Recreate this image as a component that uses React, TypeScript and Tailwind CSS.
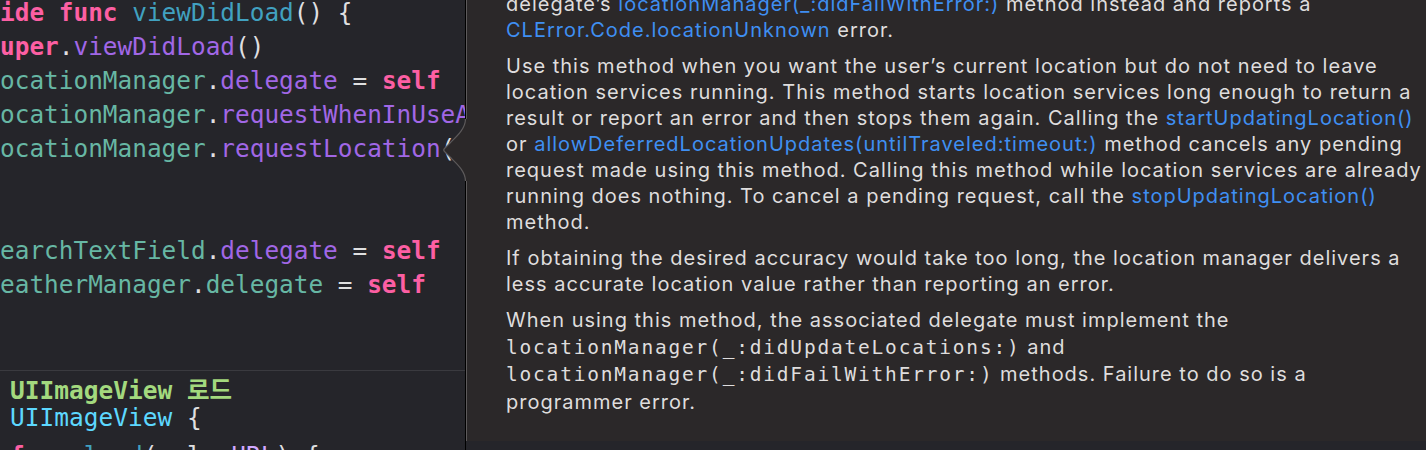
import React from 'react';

const K = ({ children }: { children: React.ReactNode }) => (
  <span className="text-[#fc5fa3] font-bold">{children}</span>
);
const P = ({ children }: { children: React.ReactNode }) => (
  <span className="text-[#67b7a4]">{children}</span>
);
const M = ({ children }: { children: React.ReactNode }) => (
  <span className="text-[#a167e6]">{children}</span>
);
const L = ({ children }: { children: React.ReactNode }) => (
  <span className="text-[#3f8ff2]">{children}</span>
);
const Mono = ({ children }: { children: React.ReactNode }) => (
  <span className="font-['DejaVu_Sans_Mono',monospace] text-[19.5px] tracking-[1.8px]">{children}</span>
);

const Line = ({ children }: { children?: React.ReactNode }) => (
  <div className="h-[34px] leading-[34px] whitespace-pre">{children ?? ' '}</div>
);

const App = () => {
  return (
    <div className="relative w-[1426px] h-[450px] overflow-hidden bg-[#25252a] text-[#dfdfe0]">
      {/* editor */}
      <div className="flex flex-col h-full font-['DejaVu_Sans_Mono','Noto_Sans_CJK_KR',monospace]">
        <div className="h-[370px] overflow-hidden text-[24.4px]">
          <div className="-mt-[4px] ml-[-73.4px]">
            <Line>
              <K>override</K> <K>func</K> <span className="text-[#41a1c0]">viewDidLoad</span>() {'{'}
            </Line>
            <Line>
              {'    '}<K>super</K>.<M>viewDidLoad</M>()
            </Line>
            <Line>
              {'    '}<P>locationManager</P>.<M>delegate</M> = <K>self</K>
            </Line>
            <Line>
              {'    '}<P>locationManager</P>.<M>requestWhenInUseAuthorization</M>()
            </Line>
            <Line>
              {'    '}<P>locationManager</P>.<M>requestLocation</M>()
            </Line>
            <Line />
            <Line />
            <Line>
              {'    '}<P>searchTextField</P>.<M>delegate</M> = <K>self</K>
            </Line>
            <Line>
              {'    '}<P>weatherManager</P>.<P>delegate</P> = <K>self</K>
            </Line>
            <Line />
          </div>
        </div>
        <div className="h-px bg-[#3a3a3f]" />
        <div className="flex-1 overflow-hidden pt-[6px] pl-[10px] text-[24.5px] leading-[27px]">
          <div className="whitespace-pre font-bold text-[#a3d97e]">UIImageView 로드</div>
          <div className="whitespace-pre">
            <span className="text-[#5dd8ff]">UIImageView</span> {'{'}
          </div>
          <div className="mt-[11px] whitespace-pre">
            <K>func</K> <span className="text-[#41a1c0]">load</span>(url: <span className="text-[#d0a8ff]">URL</span>) {'{'}
          </div>
        </div>
      </div>

      {/* quick help popover */}
      <div className="absolute top-0 bottom-0 left-[465px] right-0 border-l border-black">
        <div className="h-full border-l border-[#5d5a5b] bg-[#2b2829] pl-[39px] font-['Inter',sans-serif] text-[20px] tracking-[1px] text-[#dfdddd] whitespace-nowrap">
          <div className="-mt-[8.7px] leading-[26px]">
            <div>delegate’s <L>locationManager(_:didFailWithError:)</L> method instead and reports a</div>
            <div><L>CLError.Code.locationUnknown</L> error.</div>
          </div>
          <div className="mt-[10px] leading-[26px]">
            <div>Use this method when you want the user’s current location but do not need to leave</div>
            <div>location services running. This method starts location services long enough to return a</div>
            <div>result or report an error and then stops them again. Calling the <L>startUpdatingLocation()</L></div>
            <div>or <L>allowDeferredLocationUpdates(untilTraveled:timeout:)</L> method cancels any pending</div>
            <div>request made using this method. Calling this method while location services are already</div>
            <div>running does nothing. To cancel a pending request, call the <L>stopUpdatingLocation()</L></div>
            <div>method.</div>
          </div>
          <div className="mt-[10px] leading-[26px]">
            <div>If obtaining the desired accuracy would take too long, the location manager delivers a</div>
            <div>less accurate location value rather than reporting an error.</div>
          </div>
          <div className="mt-[9.5px] leading-[27.3px]">
            <div>When using this method, the associated delegate must implement the</div>
            <div><Mono>locationManager(_:didUpdateLocations:)</Mono> and</div>
            <div><Mono>locationManager(_:didFailWithError:)</Mono> methods. Failure to do so is a</div>
            <div>programmer error.</div>
          </div>
        </div>
      </div>

      {/* popover arrow */}
      <svg className="absolute left-[442px] top-[119px]" width="26" height="62" viewBox="0 0 26 62">
        <path
          d="M23.5 0 C23.5 10 14 18 8 24 L2.5 29.5 Q1 31 2.5 32.5 L8 38 C14 44 23.5 52 23.5 62 L26 62 L26 0 Z"
          fill="#2b2829"
        />
        <path
          d="M23.5 0 C23.5 10 14 18 8 24 L2.5 29.5 Q1 31 2.5 32.5 L8 38 C14 44 23.5 52 23.5 62"
          fill="none"
          stroke="#5d5a5b"
          strokeWidth="1.2"
        />
      </svg>
    </div>
  );
};

export default App;
